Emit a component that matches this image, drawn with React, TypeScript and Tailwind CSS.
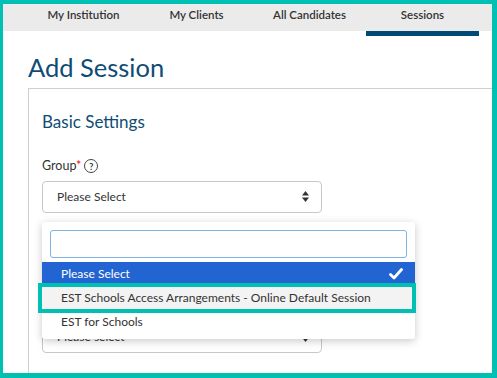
import React from "react";

const font = { fontFamily: "Lato, 'Open Sans', sans-serif" };

function Arrows() {
  return (
    <svg width="9" height="14" viewBox="0 0 9 14" className="shrink-0">
      <path d="M4.5 1 L8 5.5 L1 5.5 Z" fill="#333" />
      <path d="M4.5 12 L8 7.5 L1 7.5 Z" fill="#333" />
    </svg>
  );
}

function Select({ text }: { text: string }) {
  return (
    <div className="flex h-[32px] w-[280px] items-center justify-between rounded-[4px] border border-[#c8c8c8] bg-white pl-[14px] pr-[11px] text-[12px] text-[#333]">
      <span>{text}</span>
      <Arrows />
    </div>
  );
}

export default function App() {
  const tabs = ["My Institution", "My Clients", "All Candidates", "Sessions"];
  return (
    <div
      className="h-[378px] w-[497px] overflow-hidden border-t-[4px] border-l-[3px] border-r-[5px] border-b-[5px] border-[#00bfb3] bg-white"
      style={font}
    >
      <div className="flex h-[27px] bg-[#ebebeb] pl-[24px]">
        {tabs.map((t) => (
          <div
            key={t}
            className="relative flex w-[113px] justify-center pt-[2px] text-[11.5px] font-semibold text-[#333]"
          >
            {t}
            {t === "Sessions" && (
              <span className="absolute left-0 right-0 top-full h-[5px] bg-[#004a75]" />
            )}
          </div>
        ))}
      </div>
      <h1 className="ml-[25px] mt-[20px] text-[25.5px] leading-[32px] text-[#0e4c75]">
        Add Session
      </h1>
      <div className="ml-[25px] mt-[5px] h-[300px] w-[480px] border border-[#cfcfcf] pl-[13px] pt-[21px]">
        <h2 className="text-[17px] leading-[24px] text-[#0e4c75]">Basic Settings</h2>
        <div className="mt-[23px] flex h-[18px] items-center gap-[3px] text-[12.5px] text-[#333]">
          <span>
            Group<span className="text-[#e11]">*</span>
          </span>
          <span className="flex h-[14px] w-[14px] items-center justify-center rounded-full border-[1.5px] border-[#444] text-[9px] font-bold leading-none text-[#333]">
            ?
          </span>
        </div>
        <div className="relative mt-[6px]">
          <Select text="Please Select" />
          <div className="mt-[108px]">
            <Select text="Please select" />
          </div>
          <div className="absolute left-0 top-[41px] z-10 w-[373px] rounded-[3px] bg-white px-[8px] pb-[5px] pt-[8px] shadow-[0_2px_8px_rgba(0,0,0,0.22)]">
            <div className="h-[28px] rounded-[3px] border border-[#7eb3e6]" />
            <div className="-mx-[8px] mt-[4px] text-[12px] text-[#333]">
              <div className="flex h-[24px] items-center justify-between bg-[#2264d1] pl-[19px] pr-[12px] text-white">
                <span>Please Select</span>
                <svg width="14" height="12" viewBox="0 0 14 12">
                  <path d="M1.5 6.5 L5 10 L12.5 1.5" stroke="#fff" strokeWidth="2.8" fill="none" strokeLinecap="round" strokeLinejoin="round" />
                </svg>
              </div>
              <div className="flex h-[24px] items-center bg-[#f3f3f3] pl-[19px]">
                EST Schools Access Arrangements - Online Default Session
              </div>
              <div className="flex h-[24px] items-center pl-[19px]">EST for Schools</div>
            </div>
            <div className="absolute left-[-4px] top-[61px] h-[30px] w-[378px] border-[4px] border-[#00bfb3]" />
          </div>
        </div>
      </div>
    </div>
  );
}
